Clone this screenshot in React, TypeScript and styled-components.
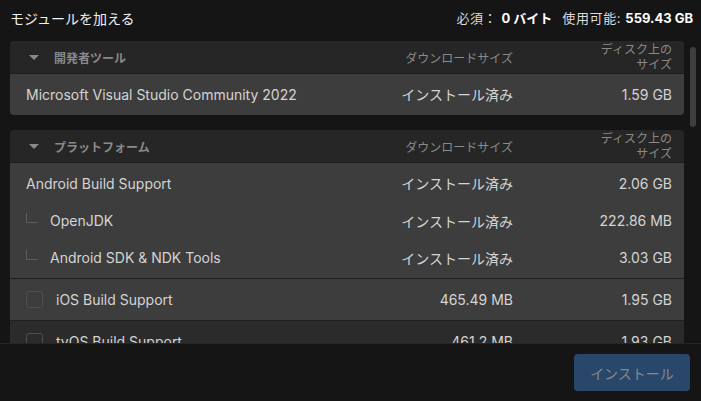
import React from "react";
import styled, { createGlobalStyle } from "styled-components";

const Global = createGlobalStyle`
  html, body { margin: 0; padding: 0; background: #151515; }
  body { font-family: "Inter", "Noto Sans CJK JP", sans-serif; }
  * { box-sizing: border-box; }
`;

const Window = styled.div`
  width: 701px;
  height: 401px;
  display: flex;
  flex-direction: column;
  background: #151515;
  overflow: hidden;
`;

const TopBar = styled.div`
  height: 35px;
  flex: none;
  display: flex;
  align-items: center;
  justify-content: space-between;
  padding: 0 8px 0 10px;
`;

const Title = styled.div`
  font-size: 14px;
  color: #f0f0f0;
`;

const Storage = styled.div`
  font-size: 13px;
  color: #dcdcdc;
  display: flex;
  gap: 10px;
  span { letter-spacing: 0.6px; }
  b { color: #ffffff; font-weight: 700; letter-spacing: 0; }
`;

const Body = styled.div`
  flex: 1;
  min-height: 0;
  display: flex;
  overflow: hidden;
`;

const List = styled.div`
  width: 684px;
  padding: 6px 0 0 10px;
  display: flex;
  flex-direction: column;
  gap: 15px;
`;

const ScrollTrack = styled.div`
  flex: 1;
  display: flex;
  justify-content: center;
  padding: 12px 0 0 0;
`;

const Thumb = styled.div`
  width: 6px;
  height: 80px;
  border-radius: 3px;
  background: #3e3e3e;
`;

const Panel = styled.div`
  flex: none;
  border-radius: 4px;
  overflow: hidden;
  background: #262626;
`;

const Grid = styled.div`
  display: grid;
  grid-template-columns: 1fr 140px 159px;
  align-items: center;
  padding: 0 12px 0 16px;
`;

const HeadRow = styled(Grid)`
  height: 33px;
  background: #262626;
  border-bottom: 1px solid #1c1c1c;
  color: #8a8a8a;
  font-size: 12px;
`;

const HeadName = styled.div`
  display: flex;
  align-items: center;
  gap: 15px;
  font-weight: 700;
  padding-left: 3px;
`;

const Caret = styled.span`
  width: 0;
  height: 0;
  border-left: 5px solid transparent;
  border-right: 5px solid transparent;
  border-top: 5px solid #8a8a8a;
`;

const HeadCol = styled.div`
  text-align: right;
`;

const DiskHead = styled.div`
  width: 80px;
  margin-left: auto;
  text-align: right;
  line-height: 15px;
`;

const Group = styled.div<{ $dark?: boolean }>`
  padding: 1px 0 2px;
  background: ${(p) => (p.$dark ? "#2b2b2b" : "#3d3d3d")};
  & + & { border-top: 1px solid #1f1f1f; }
`;

const Row = styled(Grid)<{ $sub?: boolean }>`
  height: ${(p) => (p.$sub ? 37 : 38)}px;
  color: #d4d4d4;
  font-size: 14px;
`;

const Name = styled.div<{ $gap: number }>`
  display: flex;
  align-items: center;
  gap: ${(p) => p.$gap}px;
  white-space: nowrap;
`;

const Value = styled.div`
  text-align: right;
  white-space: nowrap;
`;

const Branch = styled.span`
  width: 12px;
  height: 10px;
  border-left: 1px solid #5c5c5c;
  border-bottom: 1px solid #5c5c5c;
  margin-top: -6px;
`;

const Check = styled.span`
  width: 17px;
  height: 17px;
  border: 1px solid #4e4e4e;
  border-radius: 3px;
  flex: none;
`;

const Footer = styled.div`
  height: 58px;
  flex: none;
  border-top: 1px solid #262626;
  display: flex;
  align-items: center;
  justify-content: flex-end;
  padding-right: 11px;
  background: #151515;
`;

const InstallButton = styled.button`
  width: 116px;
  height: 37px;
  border: none;
  border-radius: 4px;
  background: #29476b;
  color: #878787;
  font-family: inherit;
  font-size: 14px;
`;

type Item = { name: string; dl: string; disk: string; kind?: "sub" | "check" };

const Header = ({ label }: { label: string }) => (
  <HeadRow>
    <HeadName>
      <Caret />
      {label}
    </HeadName>
    <HeadCol>ダウンロードサイズ</HeadCol>
    <DiskHead>ディスク上のサイズ</DiskHead>
  </HeadRow>
);

const ItemRow = ({ item }: { item: Item }) => (
  <Row $sub={item.kind === "sub"}>
    <Name $gap={item.kind === "check" ? 13 : 12}>
      {item.kind === "sub" && <Branch />}
      {item.kind === "check" && <Check />}
      {item.name}
    </Name>
    <Value>{item.dl}</Value>
    <Value>{item.disk}</Value>
  </Row>
);

export default function App() {
  return (
    <Window>
      <Global />
      <TopBar>
        <Title>モジュールを加える</Title>
        <Storage>
          <span>
            必須： <b>0 バイト</b>
          </span>
          <span>
            使用可能: <b>559.43 GB</b>
          </span>
        </Storage>
      </TopBar>
      <Body>
        <List>
          <Panel>
            <Header label="開発者ツール" />
            <Group>
              <ItemRow item={{ name: "Microsoft Visual Studio Community 2022", dl: "インストール済み", disk: "1.59 GB" }} />
            </Group>
          </Panel>
          <Panel>
            <Header label="プラットフォーム" />
            <Group>
              <ItemRow item={{ name: "Android Build Support", dl: "インストール済み", disk: "2.06 GB" }} />
              <ItemRow item={{ name: "OpenJDK", dl: "インストール済み", disk: "222.86 MB", kind: "sub" }} />
              <ItemRow item={{ name: "Android SDK & NDK Tools", dl: "インストール済み", disk: "3.03 GB", kind: "sub" }} />
            </Group>
            <Group>
              <ItemRow item={{ name: "iOS Build Support", dl: "465.49 MB", disk: "1.95 GB", kind: "check" }} />
            </Group>
            <Group $dark>
              <ItemRow item={{ name: "tvOS Build Support", dl: "461.2 MB", disk: "1.93 GB", kind: "check" }} />
            </Group>
          </Panel>
        </List>
        <ScrollTrack>
          <Thumb />
        </ScrollTrack>
      </Body>
      <Footer>
        <InstallButton>インストール</InstallButton>
      </Footer>
    </Window>
  );
}
